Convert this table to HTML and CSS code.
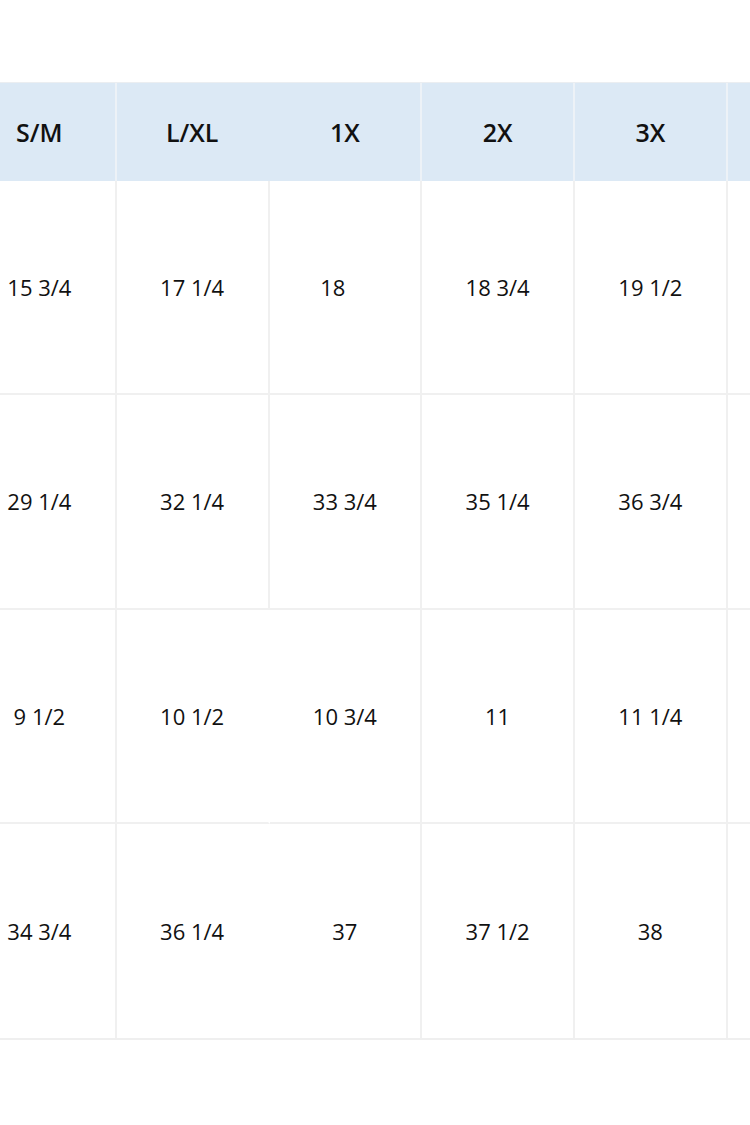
FILE: index.html
```html
<!DOCTYPE html>
<html>
<head>
<meta charset="utf-8">
<link rel="stylesheet" href="styles.css">
</head>
<body>
<div class="page">
  <div class="frame">
    <div class="size-table">
      <div class="cell head">S/M</div>
      <div class="cell head no-r">L/XL</div>
      <div class="cell head">1X</div>
      <div class="cell head">2X</div>
      <div class="cell head">3X</div>
      <div class="cell head"></div>

      <div class="cell">15 3/4</div>
      <div class="cell">17 1/4</div>
      <div class="cell shift">18</div>
      <div class="cell">18 3/4</div>
      <div class="cell">19 1/2</div>
      <div class="cell"></div>

      <div class="cell">29 1/4</div>
      <div class="cell">32 1/4</div>
      <div class="cell">33 3/4</div>
      <div class="cell">35 1/4</div>
      <div class="cell">36 3/4</div>
      <div class="cell"></div>

      <div class="cell">9 1/2</div>
      <div class="cell no-r">10 1/2</div>
      <div class="cell">10 3/4</div>
      <div class="cell">11</div>
      <div class="cell">11 1/4</div>
      <div class="cell"></div>

      <div class="cell">34 3/4</div>
      <div class="cell no-r">36 1/4</div>
      <div class="cell">37</div>
      <div class="cell">37 1/2</div>
      <div class="cell">38</div>
      <div class="cell"></div>
    </div>
  </div>
</div>
</body>
</html>
```

FILE: styles.css
```css
html, body {
  margin: 0;
  padding: 0;
  background: #ffffff;
}

.page {
  width: 750px;
  height: 1125px;
  overflow: hidden;
  padding-top: 82px;
  box-sizing: border-box;
  font-family: "Open Sans", "Noto Sans", sans-serif;
  color: #111111;
}

.frame {
  width: 750px;
  overflow: hidden;
}

.size-table {
  display: grid;
  grid-template-columns: repeat(6, 152.75px);
  grid-template-rows: 98px repeat(4, 214.25px);
  margin-left: -36px;
  width: max-content;
  border-top: 1px solid #ebeef1;
  border-bottom: 2px solid #efefef;
}

.cell {
  display: flex;
  align-items: center;
  justify-content: center;
  font-size: 22px;
  font-weight: 400;
  border-right: 2px solid #f0f0f0;
  border-bottom: 2px solid #f0f0f0;
  box-sizing: border-box;
}

.size-table > .cell:nth-last-child(-n+6) {
  border-bottom: none;
}

.cell.head {
  background: #dce9f5;
  font-size: 25px;
  font-weight: 600;
  border-right: 2px solid #edf2f7;
  border-bottom: none;
}

.cell.no-r {
  border-right-color: transparent;
}

.cell.head.no-r {
  border-right-color: #dce9f5;
}

.cell.shift {
  padding-right: 24px;
}
```
